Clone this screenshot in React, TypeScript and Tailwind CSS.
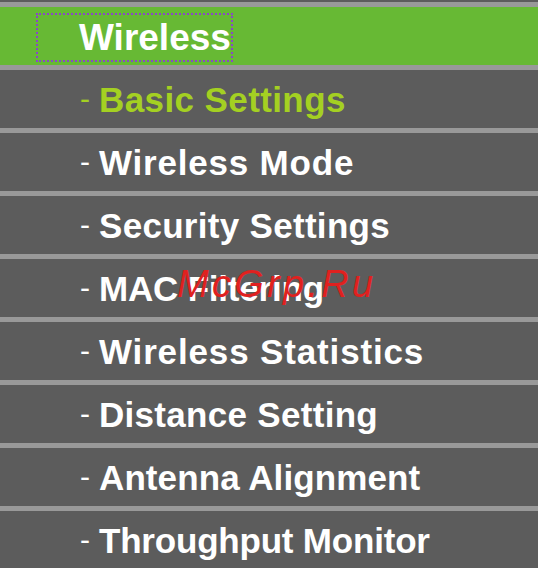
import React from "react";

const ITEMS = [
  { label: "Basic Settings", active: true, track: "tracking-[0.4px]" },
  { label: "Wireless Mode", track: "tracking-[0.8px]" },
  { label: "Security Settings", track: "tracking-[0.3px]" },
  { label: "MAC Filtering", track: "tracking-[-0.2px]" },
  { label: "Wireless Statistics", track: "tracking-[0.85px]" },
  { label: "Distance Setting", track: "tracking-[0.3px]" },
  { label: "Antenna Alignment", track: "tracking-[0.1px]" },
  { label: "Throughput Monitor", track: "tracking-[-0.2px]" },
];

const font = { fontFamily: '"Liberation Sans", Arial, sans-serif' };

export default function App() {
  return (
    <div
      className="relative w-[538px] h-[568px] overflow-hidden bg-[#5c5c5c] pt-[2px]"
      style={font}
    >
      {/* header */}
      <div className="border-t-[5px] border-[#999999] bg-[#67b934] h-[63px] flex items-center relative">
        <a
          href="#"
          className="ml-[36px] mt-[2px] h-[49px] w-[197px] flex items-center pl-[41px] border-2 border-dotted border-[#8848c8] text-white font-bold text-[37px] leading-none tracking-[0px] no-underline"
        >
          Wireless
        </a>
      </div>

      {ITEMS.map((item) => (
        <div
          key={item.label}
          className="border-t-[5px] border-[#999999] h-[63px] flex items-center pl-[80px]"
        >
          <span
            className={
              "text-[30px] leading-none mr-[9px] " +
              (item.active ? "text-[#a4d022]" : "text-white")
            }
          >
            -
          </span>
          <span
            className={
              "font-bold text-[35px] leading-none " +
              item.track +
              " " +
              (item.active ? "text-[#a4d022]" : "text-white")
            }
          >
            {item.label}
          </span>
        </div>
      ))}

      {/* watermark */}
      <div className="absolute left-[177px] top-[265px] text-[38px] leading-none italic text-[#e0211f] tracking-[3.3px]">
        McGrp.Ru
      </div>
    </div>
  );
}
